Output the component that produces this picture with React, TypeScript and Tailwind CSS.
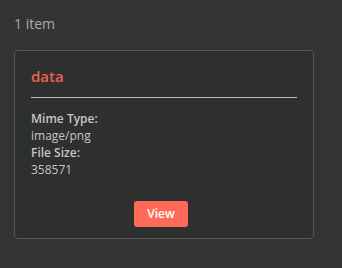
export default function App() {
  return (
    <div
      className="w-[342px] h-[268px] bg-[#333435] px-[14px] pt-[14px]"
      style={{ fontFamily: '"Open Sans", sans-serif' }}>
      <div className="text-[14px] leading-[20px] text-[#aaaaaa]">1 item</div>

      {/* Card */}
      <div className="mt-[16px] w-[300px] h-[189px] rounded-[4px] border border-[#555656] bg-[#2e2f2f] px-4 pt-[14px]">
        <div className="text-[15px] leading-[22px] font-semibold text-[#f0614d]">data</div>
        <div className="mt-[10px] h-px bg-[#b8b9ba]" />

        <div className="mt-[12px] text-[12px] leading-[17px] text-[#c4c5c6]">
          <div className="font-semibold">Mime Type:</div>
          <div>image/png</div>
          <div className="font-semibold">File Size:</div>
          <div>358571</div>
        </div>

        <div className="mt-[23px] flex justify-center pr-[6px]">
          <button className="w-[54px] h-[26px] rounded-[3px] bg-[#ff6a59] text-[12px] font-semibold text-white">
            View
          </button>
        </div>
      </div>
    </div>
  );
}
